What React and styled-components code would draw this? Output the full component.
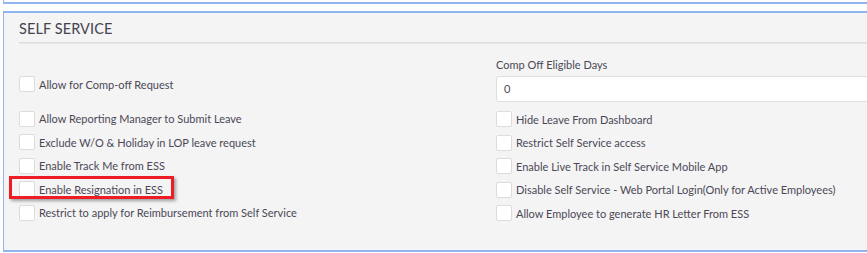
import React from "react";
import styled, { createGlobalStyle } from "styled-components";

const Global = createGlobalStyle`
  html, body { margin: 0; padding: 0; background: #ffffff; overflow: hidden; }
  body { font-family: Lato, "Open Sans", sans-serif; }
`;

const Page = styled.div`
  width: 867px;
  height: 253px;
  overflow: hidden;
  background: #fff;
`;

const PrevPanel = styled.div`
  margin-left: 3px;
  width: 1000px;
  height: 2px;
  border-left: 1px solid #8fb4ee;
  border-bottom: 2px solid #8fb4ee;
  background: #fff;
`;

const Panel = styled.section`
  margin: 7px 0 0 3px;
  width: 1000px;
  height: 241px;
  box-sizing: border-box;
  border-top: 2px solid #8fb4ee;
  border-left: 1px solid #8fb4ee;
  border-bottom: 2px solid #8fb4ee;
  background: #f4f4f4;
  padding: 0 0 0 15px;
`;

const Heading = styled.h3`
  margin: 0;
  padding-top: 5px;
  height: 22px;
  font-family: Lato, sans-serif;
  font-weight: 400;
  font-size: 14.5px;
  line-height: 22px;
  color: #45434f;
  letter-spacing: 0.1px;
`;

const Rule = styled.div`
  height: 1px;
  background: #dcdcdc;
  border-bottom: 1px solid #e8e8e8;
  margin-top: 2px;
`;

const Grid = styled.div`
  display: grid;
  grid-template-columns: 477px 1fr;
  padding-top: 12px;
`;

const Column = styled.div`
  display: flex;
  flex-direction: column;
  gap: 7.5px;
`;

const FieldLabel = styled.div`
  height: 18px;
  font-size: 11px;
  line-height: 18px;
  color: #4b4856;
`;

const Field = styled.div`
  display: flex;
  flex-direction: column;
  gap: 2px;
  margin-bottom: 1.5px;
`;

const Input = styled.div`
  height: 26px;
  box-sizing: border-box;
  border: 1px solid #dedede;
  border-radius: 3px;
  background: #fff;
  padding-left: 7px;
  font-size: 11px;
  line-height: 24px;
  color: #4b4856;
`;

const Spacer = styled.div`
  height: ${(p) => p.$h}px;
`;

const Row = styled.label`
  position: relative;
  display: flex;
  align-items: center;
  gap: 4px;
  height: 16px;
  font-size: 11px;
  color: #4b4856;
  white-space: nowrap;
  margin-bottom: ${(p) => (p.$extra ? p.$extra : 0)}px;
`;

const Box = styled.span`
  width: 16px;
  height: 16px;
  box-sizing: border-box;
  border: 1px solid #dcdcdc;
  border-radius: 2px;
  background: #fff;
  flex: none;
`;

const Highlight = styled.span`
  position: absolute;
  left: -10px;
  top: -5px;
  width: 165px;
  height: 23px;
  border: 3px solid #ee1c24;
  box-sizing: border-box;
  box-shadow: 2px 2px 3px rgba(0, 0, 0, 0.35);
  pointer-events: none;
`;

const leftRows = [
  "Allow Reporting Manager to Submit Leave",
  "Exclude W/O & Holiday in LOP leave request",
  "Enable Track Me from ESS",
  "Enable Resignation in ESS",
  "Restrict to apply for Reimbursement from Self Service",
];

const rightRows = [
  "Hide Leave From Dashboard",
  "Restrict Self Service access",
  "Enable Live Track in Self Service Mobile App",
  "Disable Self Service - Web Portal Login(Only for Active Employees)",
  "Allow Employee to generate HR Letter From ESS",
];

function Check({ text, highlight, extra }) {
  return (
    <Row $extra={extra}>
      <Box />
      {text}
      {highlight && <Highlight />}
    </Row>
  );
}

export default function App() {
  return (
    <Page>
      <Global />
      <PrevPanel />
      <Panel>
        <Heading>SELF SERVICE</Heading>
        <Rule />
        <Grid>
          <Column>
            <Spacer $h={12.5} />
            <Check text="Allow for Comp-off Request" extra={11} />
            {leftRows.map((t) => (
              <Check key={t} text={t} highlight={t === "Enable Resignation in ESS"} />
            ))}
          </Column>
          <Column>
            <Field>
              <FieldLabel>Comp Off Eligible Days</FieldLabel>
              <Input>0</Input>
            </Field>
            {rightRows.map((t) => (
              <Check key={t} text={t} />
            ))}
          </Column>
        </Grid>
      </Panel>
    </Page>
  );
}
